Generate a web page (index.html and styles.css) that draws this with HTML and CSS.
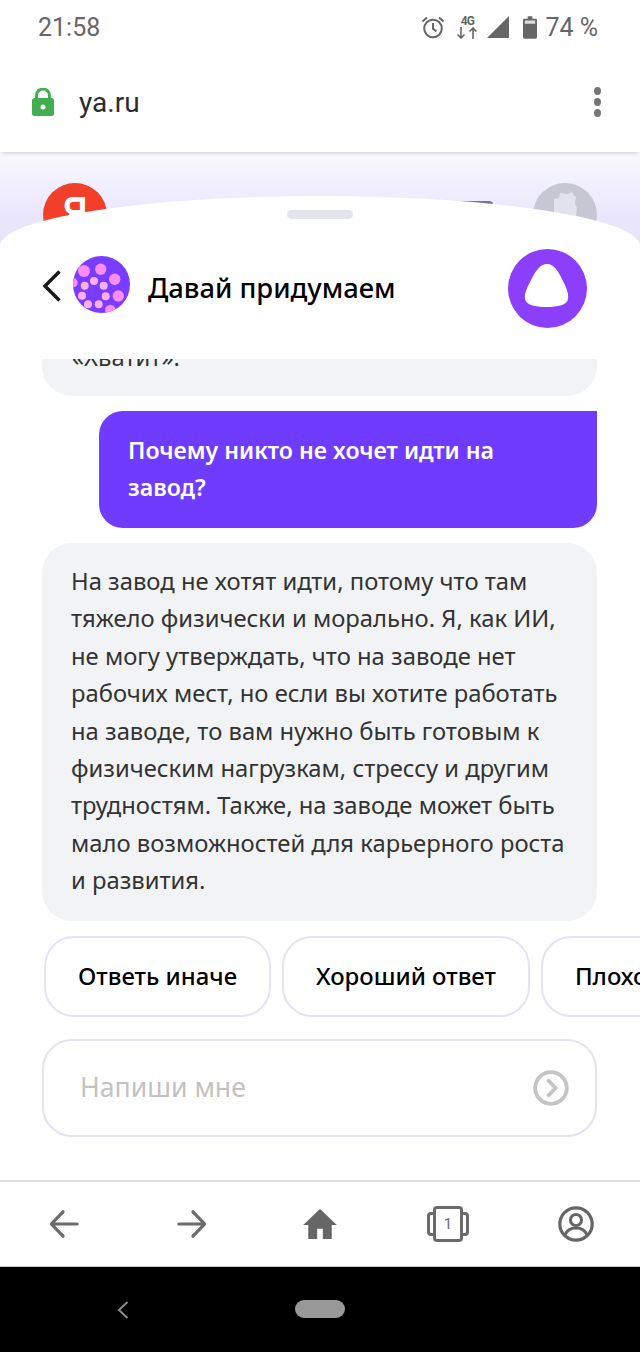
FILE: index.html
```html
<!DOCTYPE html>
<html lang="ru">
<head>
<meta charset="utf-8">
<title>Давай придумаем</title>
<link rel="stylesheet" href="styles.css">
</head>
<body>
<div class="phone">
  <div class="status">
    <span class="clock">21:58</span>
    <div class="status-right">
      <svg class="ic-alarm" width="24" height="24" viewBox="0 0 24 24" fill="none" stroke="#666" stroke-width="2"><circle cx="12" cy="13.500" r="8.800"/><path d="M12 8v5.800l3.400 2.600M1.500 6.500 6 2.500M22.500 6.500 18 2.500"/></svg>
      <span class="net"><span class="net-label">4G</span><svg width="22" height="12" viewBox="0 0 22 12" fill="none" stroke="#666" stroke-width="1.600"><path d="M5 0v11M1.500 7.500 5 11l3.500-3.500M17 12V1M13.500 4.500 17 1l3.500 3.500"/></svg></span>
      <svg class="ic-signal" width="22" height="22" viewBox="0 0 22 22"><path d="M22 0v22H0z" fill="#666"/></svg>
      <svg class="ic-battery" width="14" height="23" viewBox="0 0 15 24"><path d="M5 0h5v2.500h3.500a1.500 1.500 0 0 1 1.500 1.500v18.500a1.500 1.500 0 0 1-1.500 1.500h-12A1.500 1.500 0 0 1 0 22.500V4a1.500 1.500 0 0 1 1.500-1.500H5z" fill="#666"/><rect x="2" y="4.500" width="11" height="3.500" fill="#ddd"/></svg>
      <span class="pct">74 %</span>
    </div>
  </div>
  <div class="browser">
    <svg width="22" height="28" viewBox="0 0 22 28"><path d="M4.500 12V7.500a6.500 6.500 0 0 1 13 0V12" fill="none" stroke="#43ad52" stroke-width="3"/><rect y="10" width="22" height="18" rx="2.500" fill="#43ad52"/><circle cx="11" cy="19" r="2.500" fill="#fff"/></svg>
    <span class="url">ya.ru</span>
    <span class="kebab"><i></i><i></i><i></i></span>
  </div>
  <div class="page">
    <div class="backdrop">
      <span class="ya-logo"><span class="ya-glyph">Я</span></span>
      <span class="mid-icon"></span>
      <span class="user-pic"><svg width="64" height="64" viewBox="0 0 64 64"><path d="M21 16l5-1 1-5 8 1 4-2 2 4 2 1-1 7 2 4-1 8 2 3v12H23l-2-8z" fill="#e2e2ee"/></svg></span>
    </div>
    <section class="sheet">
      <div class="handle"></div>
      <header class="head">
        <svg class="back" width="20" height="32" viewBox="0 0 20 32" fill="none" stroke="#1a1a1a" stroke-width="3.500"><path d="M17.500 1.500 3 16l14.500 14.500"/></svg>
        <svg class="skill" width="57" height="57" viewBox="0 0 57 57"><defs><clipPath id="c"><circle cx="28.500" cy="28.500" r="28.500"/></clipPath></defs><g clip-path="url(#c)"><rect width="57" height="57" fill="#7a3cff"/><g fill="#f98cf5"><circle cx="11" cy="15" r="6"/><circle cx="27.700" cy="13.300" r="5.700"/><circle cx="41.700" cy="23.300" r="5.700"/><circle cx="45.300" cy="40" r="5.700"/><circle cx="37.300" cy="54" r="5.300"/><circle cx="0" cy="26.700" r="4.700"/></g><g fill="#fbb0f3"><circle cx="21" cy="25" r="4"/><circle cx="11.700" cy="29.700" r="4"/><circle cx="30.700" cy="29.700" r="4"/><circle cx="9" cy="39.700" r="4"/><circle cx="32.700" cy="40.300" r="4"/><circle cx="15" cy="48.300" r="4"/><circle cx="25.700" cy="48.300" r="4"/></g></g></svg>
        <h1 class="title">Давай придумаем</h1>
        <svg class="alice" width="79" height="79" viewBox="0 0 79 79"><circle cx="39.500" cy="39.500" r="39.500" fill="#8c3ffb"/><path d="M39 15C46 15 50 22 54 30 58 38 61 44 60 50 59 56 50 58 38.500 58 27 58 18 56 17 50 16 44 20 37 24 29 28 22 32 15 39 15Z" fill="#fff"/></svg>
      </header>
      <div class="chat">
        <div class="bubble bubble-cut"><p>«Хватит».</p></div>
        <div class="bubble-user">Почему никто не хочет идти на завод?</div>
        <div class="bubble bubble-bot">На завод не хотят идти, потому что там тяжело физически и морально. Я, как ИИ, не могу утверждать, что на заводе нет рабочих мест, но если вы хотите работать на заводе, то вам нужно быть готовым к физическим нагрузкам, стрессу и другим трудностям. Также, на заводе может быть мало возможностей для карьерного роста и развития.</div>
        <div class="chips">
          <span class="chip">Ответь иначе</span>
          <span class="chip">Хороший ответ</span>
          <span class="chip">Плохой ответ</span>
        </div>
        <div class="input">
          <span class="placeholder">Напиши мне</span>
          <svg width="36" height="36" viewBox="0 0 36 36" fill="none" stroke="#c4c4c4" stroke-width="3.800"><circle cx="18" cy="18" r="15.800"/><path d="M14.500 9.500 22.500 18l-8 8.500"/></svg>
        </div>
      </div>
    </section>
  </div>
  <nav class="toolbar">
    <svg width="30" height="30" viewBox="0 0 32 32" fill="none" stroke="#6b6b6b" stroke-width="3.400" stroke-linecap="round" stroke-linejoin="round"><path d="M30 16H3M15 3 2.500 16 15 29"/></svg>
    <svg width="30" height="30" viewBox="0 0 32 32" fill="none" stroke="#6b6b6b" stroke-width="3.400" stroke-linecap="round" stroke-linejoin="round"><path d="M2 16h27M17 3l12.500 13L17 29"/></svg>
    <svg width="36" height="30" viewBox="0 0 36 32"><path d="M18 0 36 17h-5.500v15H21V21h-6v11H5.500V17H0z" fill="#666"/></svg>
    <span class="tabs"><span class="tabs-n">1</span></span>
    <svg width="36" height="36" viewBox="0 0 36 36" fill="none" stroke="#666" stroke-width="3.200"><circle cx="18" cy="18" r="16.200"/><circle cx="18" cy="14" r="5.500"/><path d="M7 29c2-5 6-7 11-7s9 2 11 7"/></svg>
  </nav>
  <div class="android">
    <svg width="12" height="18" viewBox="0 0 12 18" fill="none" stroke="#8a8a8a" stroke-width="2"><path d="M10.500 1 2 9l8.500 8"/></svg>
    <span class="pill"></span>
  </div>
</div>
</body>
</html>
```

FILE: styles.css
```css
* { box-sizing: border-box; }
html, body { margin: 0; padding: 0; background: #fff; }
.phone { width: 640px; height: 1352px; display: flex; flex-direction: column; overflow: hidden; font-family: "Noto Sans", sans-serif; }

.status { height: 50px; flex: none; display: flex; align-items: center; justify-content: space-between; padding: 4px 42px 0 38px; background: #fff; color: #666; font-family: Roboto, sans-serif; font-size: 25px; }
.status-right { display: flex; align-items: center; }
.net { margin-left: 11px; display: flex; flex-direction: column; align-items: center; width: 22px; color: #666; }
.net-label { font-size: 12px; line-height: 12px; font-weight: 700; letter-spacing: -1px; }
.ic-signal { margin-left: 9px; }
.ic-battery { margin-left: 14px; }
.pct { margin-left: 8px; }

.browser { height: 102px; flex: none; display: flex; align-items: center; padding: 2px 39px 0 32px; background: #fff; box-shadow: 0 3px 4px -2px rgba(0,0,0,.2); position: relative; z-index: 2; }
.url { margin-left: 25px; font-family: Roboto, sans-serif; font-size: 28px; color: #2b2b2b; flex: 1; }
.kebab { display: flex; flex-direction: column; gap: 3px; }
.kebab i { display: block; width: 7px; height: 8px; border-radius: 50%; background: #757575; }

.page { flex: 1; min-height: 0; display: flex; flex-direction: column; background: linear-gradient(#f9f9ff, #e9e6fc 65px); }
.backdrop { flex: none; display: flex; justify-content: space-between; align-items: flex-start; height: 95px; padding: 31px 43px 0; position: relative; }
.ya-logo { width: 64px; height: 64px; border-radius: 50%; background: #f23f2a; color: #fff; font-family: "Liberation Sans", sans-serif; font-weight: 700; font-size: 42px; line-height: 58px; text-align: center; }
.ya-glyph { display: inline-block; transform: scaleX(.8); }
.mid-icon { position: absolute; left: 458px; top: 49px; width: 35px; height: 20px; border-radius: 4px; background: #77748c; }
.user-pic { width: 64px; height: 64px; border-radius: 50%; background: #c7c7d3; overflow: hidden; display: block; }

.sheet { flex: 1; min-height: 0; margin-top: -51px; position: relative; display: flex; flex-direction: column; background: #fff; border-radius: 320px 320px 0 0 / 50px 50px 0 0; }
.handle { position: absolute; left: 287px; top: 14px; width: 66px; height: 9px; border-radius: 5px; background: #e4e4ec; }
.head { height: 163px; flex: none; display: flex; align-items: flex-start; padding: 53px 53px 0 42px; position: relative; z-index: 1; }
.back { margin-top: 21px; flex: none; }
.skill { margin: 7px 0 0 11px; flex: none; }
.title { margin: 0 0 0 18px; flex: 1; padding-top: 20px; font-size: 27.3px; line-height: 38px; font-weight: 500; color: #000; }
.alice { flex: none; }

.chat { flex: 1; min-height: 0; overflow: hidden; padding: 0 43px 0 42px; display: flex; flex-direction: column; }
.bubble { background: #f2f3f5; color: #333; font-size: 23.8px; line-height: 37.4px; border-radius: 30px; }
.bubble-cut { height: 37px; flex: none; overflow: hidden; border-radius: 0 0 30px 30px; padding: 0 30px; }
.bubble-cut p { margin: -20px 0 0; }
.bubble-user { margin: 15px 0 0 57px; height: 117px; flex: none; padding: 21px 29px; background: #6f3cff; color: #fff; font-size: 23.15px; line-height: 37px; font-weight: 600; border-radius: 24px 0 24px 24px; }
.bubble-bot { margin-top: 15px; height: 378px; flex: none; padding: 20px 29px; }
.chips { margin: 15px -43px 0 2px; height: 81px; flex: none; display: flex; gap: 11px; }
.chip { flex: none; height: 81px; padding: 0 32px 2px; display: flex; align-items: center; border: 2px solid #e4e3f3; border-radius: 30px; font-size: 23.9px; font-weight: 500; color: #000; }
.input { margin-top: 22px; height: 98px; flex: none; display: flex; align-items: center; justify-content: space-between; padding: 0 26px 0 36px; border: 2px solid #e4e3f3; border-radius: 30px; }
.placeholder { font-size: 26.6px; color: #c2c2c2; padding-bottom: 2px; }

.toolbar { height: 87px; flex: none; display: grid; grid-template-columns: repeat(5, 1fr); align-items: center; justify-items: center; background: #fff; border-top: 2px solid #dedede; border-bottom: 1px solid #ccc; }
.tabs { width: 42px; height: 24px; display: flex; align-items: center; justify-content: center; border: 3px solid #6b6b6b; border-radius: 4px; }
.tabs-n { width: 30px; height: 36px; background: #fff; border: 3px solid #6b6b6b; border-radius: 4px; display: flex; align-items: center; justify-content: center; font-family: Roboto, sans-serif; font-size: 15px; color: #6b6b6b; flex: none; }

.android { height: 85px; flex: none; background: #000; display: flex; align-items: center; position: relative; padding-left: 117px; }
.pill { position: absolute; left: 295px; top: 33px; width: 50px; height: 18px; border-radius: 9px; background: #999; }
```
